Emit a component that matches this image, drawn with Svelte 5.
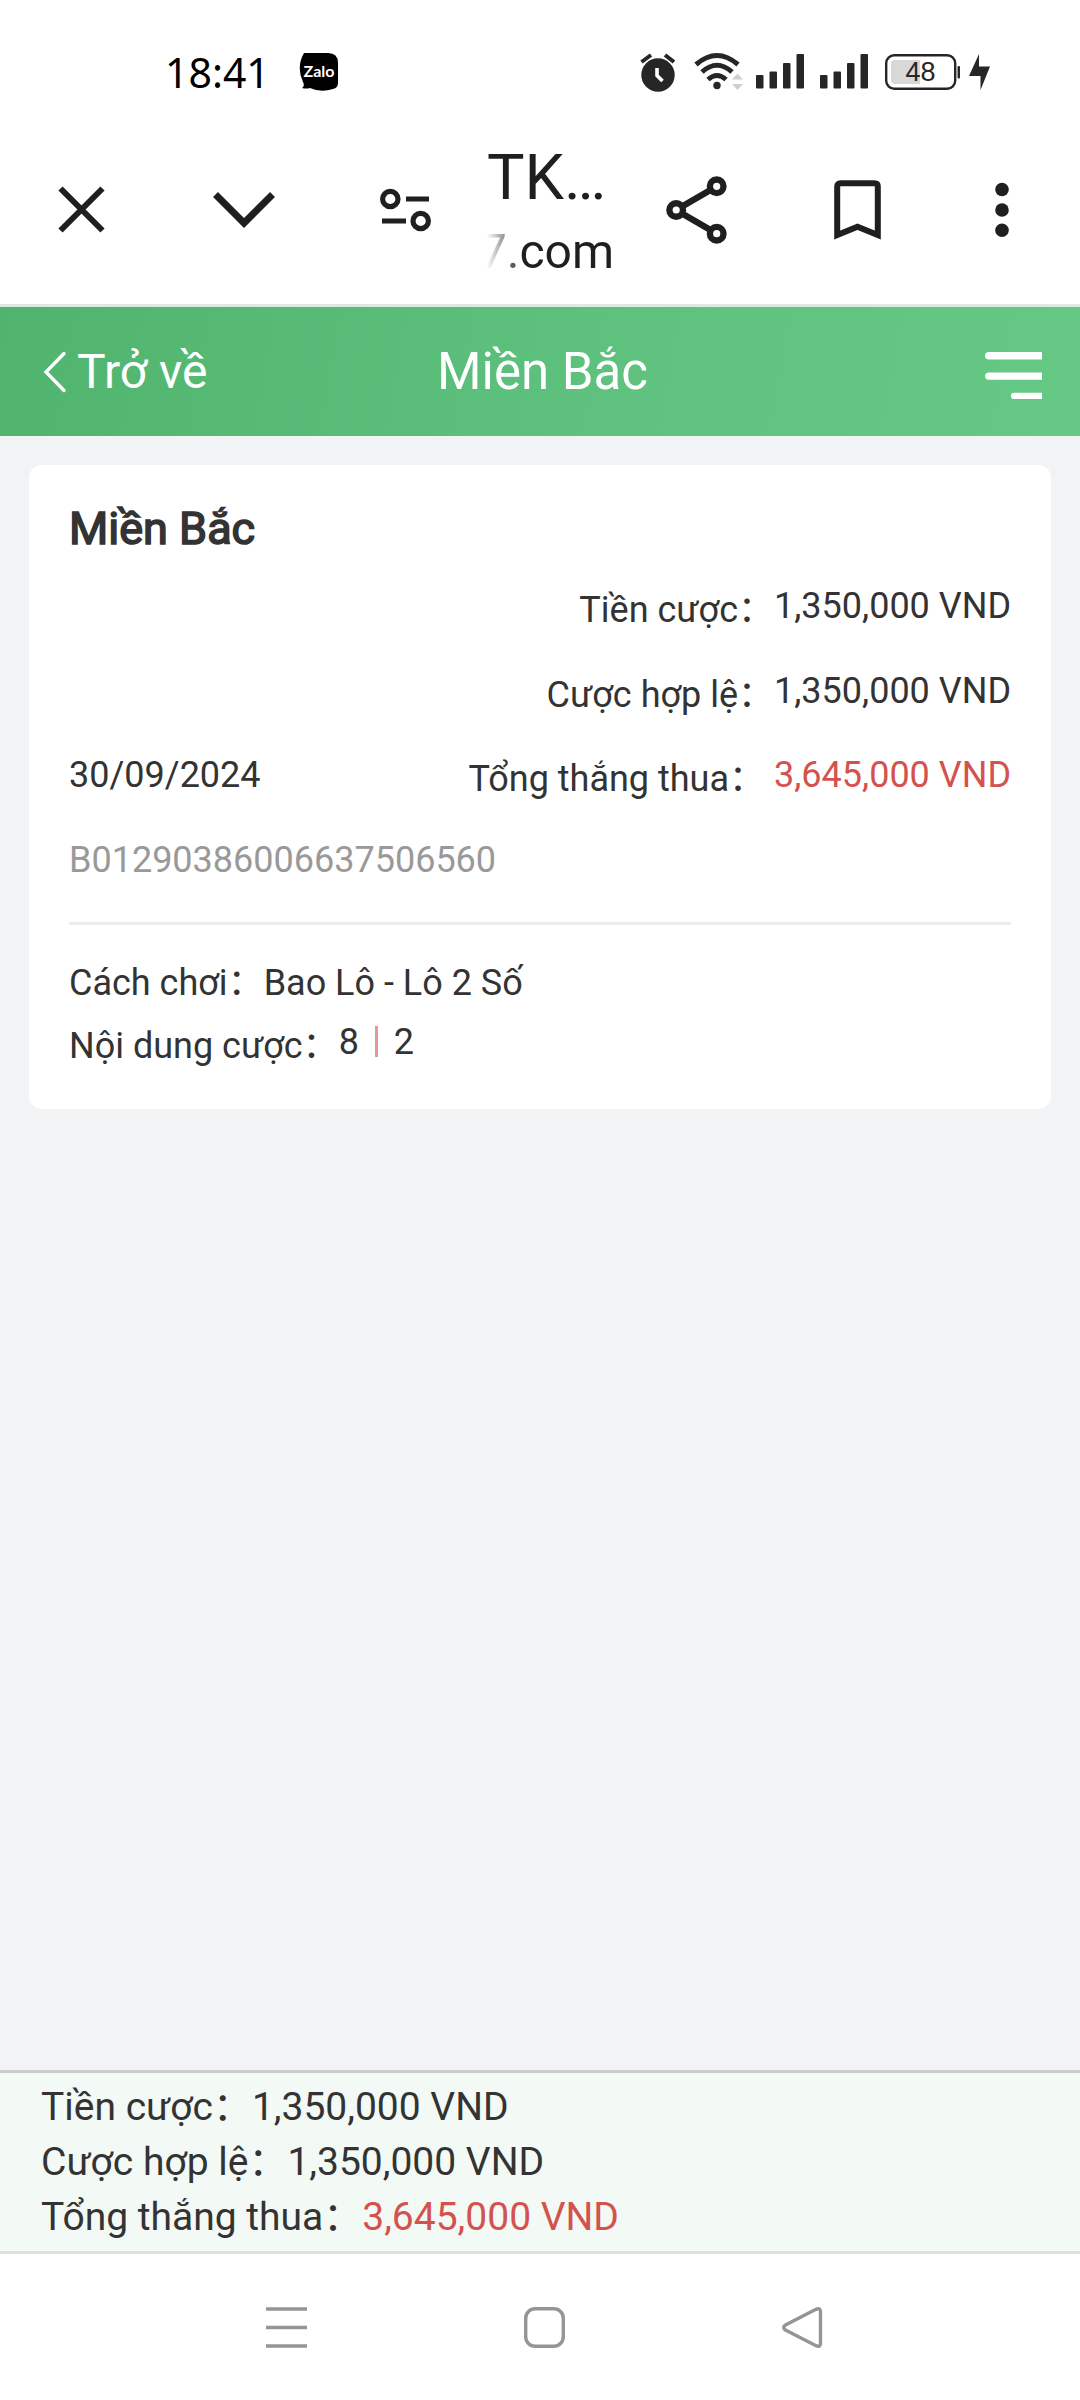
<script>
  const stakes = [
    { label: "Tiền cược", value: "1,350,000 VND" },
    { label: "Cược hợp lệ", value: "1,350,000 VND" },
    { label: "Tổng thắng thua", value: "3,645,000 VND", win: true },
  ];

  const bet = {
    region: "Miền Bắc",
    date: "30/09/2024",
    code: "B01290386006637506560",
    type: "Bao Lô - Lô 2 Số",
    picks: ["8", "2"],
  };
</script>

<div class="screen">
  <div class="status">
    <span class="time">18:41</span>
    <svg class="zalo" width="39" height="38" viewBox="0 0 39 38">
      <path d="M5 0H29Q39 0 39 10V30Q39 35 34 36Q22 40 11 35Q7 36 3 35Q6 33 4 29Q-3 14 5 0Z" fill="#000" />
      <text x="20" y="23.5" text-anchor="middle" textLength="31" lengthAdjust="spacingAndGlyphs">Zalo</text>
    </svg>
    <div class="indicators">
      <svg width="35" height="40" viewBox="0 0 35 40">
        <circle cx="18" cy="23" r="16.7" fill="#262626" />
        <path d="M1.5 10L11 3M34 10L25 3" stroke="#262626" stroke-width="4" />
        <path d="M17 16V23.5L22.5 29" fill="none" stroke="#fff" stroke-width="3.6" />
      </svg>
      <svg class="wifi" width="50" height="40" viewBox="0 0 50 40">
        <g fill="none" stroke="#262626" stroke-width="5">
          <path d="M2 12.5Q23 -5.500 44 12.500" />
          <path d="M8 20Q23 6.500 38 20" />
          <path d="M14 27.500Q23 19.500 32 27.500" />
        </g>
        <circle cx="23" cy="33.500" r="3.700" fill="#262626" />
        <path d="M38 27.500L43.500 21.500L49 27.500ZM38 32L43.500 38L49 32Z" fill="#d0d0d0" />
      </svg>
      {#each [0, 1] as sim (sim)}
        <svg class="signal" width="48" height="40" viewBox="0 0 48 40">
          <g fill="#262626">
            <rect x="0" y="23" width="7.500" height="13.500" rx="1" />
            <rect x="13.500" y="19.500" width="7.500" height="17" rx="1" />
            <rect x="27" y="11" width="7.500" height="25.500" rx="1" />
            <rect x="40.500" y="2" width="7.500" height="34.500" rx="1" />
          </g>
        </svg>
      {/each}
      <svg class="battery" width="75" height="40" viewBox="0 0 75 40">
        <rect x="1.200" y="3.200" width="69" height="33.500" rx="8" fill="#fff" stroke="#262626" stroke-width="2.400" />
        <path d="M35 8V32H10Q6 32 6 28V12Q6 8 10 8Z" fill="#d8d8d8" />
        <rect x="72.500" y="14" width="2.500" height="12.500" rx="1" fill="#262626" />
        <text x="35.500" y="29.300" text-anchor="middle">48</text>
      </svg>
      <svg class="bolt" width="21" height="40" viewBox="0 0 21 40">
        <path d="M10 2V14.500H21L11.500 38V24H0Z" fill="#262626" />
      </svg>
    </div>
  </div>

  <div class="browser">
    <svg class="close" width="47" height="47" viewBox="0 0 47 47">
      <path d="M2.500 2.500L44.500 44.500M44.500 2.500L2.500 44.500" />
    </svg>
    <svg class="collapse" width="62" height="36" viewBox="0 0 62 36">
      <path d="M2.500 2.500L31 31L59.500 2.500" />
    </svg>
    <svg class="tune" width="51" height="44" viewBox="0 0 51 44">
      <circle cx="10.300" cy="11" r="7.700" />
      <circle cx="40.700" cy="33" r="7.700" />
      <path d="M26 11H49M2 33H26" />
    </svg>
    <div class="page">
      <span class="name">TK…</span>
      <span class="url"><bdi>27.com</bdi></span>
    </div>
    <svg class="share" width="61" height="68" viewBox="0 0 61 68">
      <path d="M50.500 10.500L10 34L50.500 57.500" />
      <circle cx="50.700" cy="10.300" r="6.800" />
      <circle cx="10.200" cy="34" r="6.800" />
      <circle cx="50.700" cy="57.700" r="6.800" />
    </svg>
    <svg class="bookmark" width="47" height="60" viewBox="0 0 47 60">
      <path d="M3.200 55V6.500Q3.200 3.200 6.500 3.200H40.500Q43.800 3.200 43.800 6.500V55L23.500 46.800Z" />
    </svg>
    <svg class="more" width="14" height="56" viewBox="0 0 14 56">
      <circle cx="7" cy="7.500" r="6.800" />
      <circle cx="7" cy="28" r="6.800" />
      <circle cx="7" cy="48.200" r="6.800" />
    </svg>
  </div>

  <header>
    <a class="back" href="#back">
      <svg width="24" height="42" viewBox="0 0 24 42">
        <path d="M21 2.500L3 21L21 39.500" />
      </svg>
      Trở về
    </a>
    <h1>{bet.region}</h1>
    <svg class="menu" width="57" height="47" viewBox="0 0 57 47">
      <path d="M57 0V7.500H3.700A3.700 3.700 0 0 1 3.700 0ZM57 20.500V27.700H3.700A3.600 3.600 0 0 1 3.700 20.500ZM57 40.800V47H29A3.100 3.100 0 0 1 29 40.800Z" />
    </svg>
  </header>

  <main>
    <section class="card">
      <h2>{bet.region}</h2>
      {#each stakes as row (row.label)}
        <div class="row">
          {#if row.win}<span class="date">{bet.date}</span>{/if}
          <span class:spaced={row.win}>{row.label}：</span>
          <span class:win={row.win}>{row.value}</span>
        </div>
      {/each}
      <div class="row code">{bet.code}</div>
      <div class="detail">
        <p>Cách chơi：{bet.type}</p>
        <p>
          Nội dung cược：{#each bet.picks as pick, i (pick)}{#if i > 0}<i></i>{/if}<b>{pick}</b>{/each}
        </p>
      </div>
    </section>
  </main>

  <footer>
    {#each stakes as row (row.label)}
      <p>{row.label}：<span class:win={row.win}>{row.value}</span></p>
    {/each}
  </footer>

  <nav>
    <svg width="41" height="41" viewBox="0 0 41 41">
      <path d="M0 2H41M0 20.500H41M0 39H41" />
    </svg>
    <svg width="41" height="41" viewBox="0 0 41 41">
      <rect x="1.700" y="1.700" width="37.600" height="37.600" rx="9.500" />
    </svg>
    <svg width="41" height="41" viewBox="0 0 41 41">
      <path d="M34 2.300L3.500 18Q0 20.500 3.500 23L34 38.700Q38.500 40.500 38.500 36V5Q38.500 0.500 34 2.300Z" />
    </svg>
  </nav>
</div>

<style>
  :global(body) {
    background: #fff;
  }
  .screen {
    width: 1080px;
    height: 2400px;
    display: flex;
    flex-direction: column;
    overflow: hidden;
    font-family: Roboto, "Noto Sans CJK SC", sans-serif;
    font-size: 36px;
    color: #333;
    background: #f2f3f5;
  }
  svg {
    display: block;
    flex-shrink: 0;
  }
  h1,
  h2,
  p {
    margin: 0;
    font-weight: 400;
  }
  .win {
    color: #d4524e;
  }

  .status {
    height: 115px;
    padding: 29px 90px 0 165px;
    box-sizing: border-box;
    display: flex;
    align-items: center;
    background: #fff;
  }
  .time {
    width: 134px;
    font-family: "Noto Sans", sans-serif;
    font-size: 41px;
    line-height: 48px;
    color: #000;
  }
  .zalo text {
    font: 700 16px Lato, sans-serif;
    fill: #fff;
  }
  .indicators {
    margin-left: auto;
    display: flex;
  }
  .wifi {
    margin-left: 19px;
  }
  .signal {
    margin-left: 12px;
  }
  .signal + .signal {
    margin-left: 16px;
  }
  .battery {
    margin-left: 17px;
  }
  .battery text {
    font: 27px "Liberation Sans", sans-serif;
    fill: #262626;
  }
  .bolt {
    margin-left: 9px;
  }

  .browser {
    height: 189px;
    padding-left: 58px;
    display: flex;
    align-items: center;
    background: #fff;
    border-bottom: 3px solid #dfe9e2;
    color: #1f1f1f;
  }
  .browser svg {
    fill: none;
    stroke: #1f1f1f;
    stroke-width: 6;
  }
  .browser .collapse {
    margin-left: 108px;
    stroke-width: 7;
  }
  .browser .tune {
    margin-left: 105px;
    stroke-width: 5.2;
  }
  .page {
    width: 135px;
    margin-left: 56px;
    display: flex;
    flex-direction: column;
  }
  .name {
    font-size: 63px;
    line-height: 84px;
  }
  .url {
    width: 127px;
    font-size: 48px;
    line-height: 64px;
    overflow: hidden;
    direction: rtl;
    white-space: nowrap;
    -webkit-mask-image: linear-gradient(90deg, transparent, #000 36px);
    mask-image: linear-gradient(90deg, transparent, #000 36px);
  }
  .browser .share {
    margin-left: 44px;
    stroke-width: 6.4;
  }
  .share circle {
    fill: #fff;
  }
  .browser .bookmark {
    margin-left: 107px;
  }
  .browser .more {
    margin-left: 114px;
    fill: #1f1f1f;
    stroke: none;
  }

  header {
    height: 129px;
    padding: 0 38px 0 43px;
    box-sizing: border-box;
    display: grid;
    grid-template-columns: 1fr auto 1fr;
    align-items: center;
    color: #fff;
    background: linear-gradient(100deg, #50b46e, #5fc27f 60%, #65c884);
  }
  .back {
    display: flex;
    align-items: center;
    gap: 10px;
    font-size: 48px;
    line-height: 60px;
    color: inherit;
    text-decoration: none;
  }
  .back svg {
    fill: none;
    stroke: #fff;
    stroke-width: 3.4;
    stroke-linecap: round;
  }
  h1 {
    font-size: 51px;
    line-height: 60px;
  }
  .menu {
    margin-top: 8px;
    justify-self: end;
    fill: #fff;
  }

  main {
    flex: 1;
    padding: 29px;
  }
  .card {
    height: 644px;
    padding: 29px 40px;
    box-sizing: border-box;
    border-radius: 13px;
    background: #fff;
  }
  h2 {
    font-size: 45px;
    line-height: 70px;
    -webkit-text-stroke: 1.6px #333;
  }
  .row {
    height: 84.5px;
    display: flex;
    align-items: center;
    justify-content: flex-end;
    white-space: nowrap;
  }
  .date {
    margin-right: auto;
  }
  .spaced {
    margin-right: 9px;
  }
  .code {
    justify-content: flex-start;
    color: #999;
  }
  .detail {
    margin-top: 20px;
    padding-top: 22px;
    border-top: 3px solid #ededed;
  }
  .detail p {
    height: 63px;
    display: flex;
    align-items: center;
    white-space: nowrap;
  }
  .detail b {
    font-weight: 400;
  }
  .detail i {
    width: 3px;
    height: 31px;
    margin: 0 16px;
    background: #e29a98;
  }

  footer {
    height: 178px;
    padding: 7px 41px 0;
    box-sizing: content-box;
    height: 171px;
    border-top: 3px solid #c9ccca;
    border-bottom: 3px solid #dfe0df;
    background: #f3f9f5;
    font-size: 39px;
    line-height: 55px;
  }
  nav {
    height: 146px;
    padding: 0 257px 0 266px;
    display: flex;
    align-items: center;
    justify-content: space-between;
    background: #fff;
  }
  nav svg {
    fill: none;
    stroke: #959595;
    stroke-width: 3.4;
  }
</style>
